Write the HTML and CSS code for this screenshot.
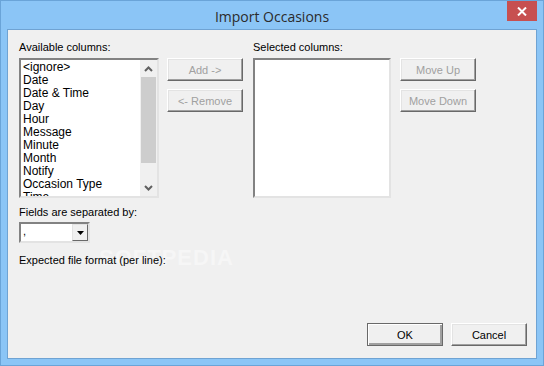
FILE: index.html
```html
<!DOCTYPE html>
<html lang="en">
<head>
    <meta charset="UTF-8">
    <title>Import Occasions</title>
    <link rel="stylesheet" href="styles.css">
</head>
<body>
    <div class="window">
        <div class="titlebar">
            <span class="title">Import Occasions</span>
            <div class="close">
                <svg width="10" height="9" viewBox="0 0 10 9"><path d="M1 0.5 L9 8.5 M9 0.5 L1 8.5" stroke="#fff" stroke-width="2"/></svg>
            </div>
        </div>

        <div class="client">
            <div class="watermark">SOFTPEDIA</div>

            <div class="columns">
                <div class="col col-list">
                    <label class="lbl">Available columns:</label>
                    <div class="listbox">
                        <ul class="items">
                            <li>&lt;ignore&gt;</li>
                            <li>Date</li>
                            <li>Date &amp; Time</li>
                            <li>Day</li>
                            <li>Hour</li>
                            <li>Message</li>
                            <li>Minute</li>
                            <li>Month</li>
                            <li>Notify</li>
                            <li>Occasion Type</li>
                            <li>Time</li>
                        </ul>
                        <div class="scrollbar">
                            <div class="arrow">
                                <svg width="9" height="6" viewBox="0 0 9 6"><path d="M1 5 L4.5 1.5 L8 5" stroke="#606060" stroke-width="2" fill="none"/></svg>
                            </div>
                            <div class="track"><div class="thumb"></div></div>
                            <div class="arrow">
                                <svg width="9" height="6" viewBox="0 0 9 6"><path d="M1 1 L4.5 4.5 L8 1" stroke="#606060" stroke-width="2" fill="none"/></svg>
                            </div>
                        </div>
                    </div>
                </div>

                <div class="col col-btn col-add">
                    <button class="btn" disabled>Add -&gt;</button>
                    <button class="btn" disabled>&lt;- Remove</button>
                </div>

                <div class="col col-sel">
                    <label class="lbl">Selected columns:</label>
                    <div class="listbox"></div>
                </div>

                <div class="col col-btn col-move">
                    <button class="btn" disabled>Move Up</button>
                    <button class="btn" disabled>Move Down</button>
                </div>
            </div>

            <label class="lbl sep-lbl">Fields are separated by:</label>
            <div class="combo">
                <span class="combo-value">,</span>
                <div class="combo-btn">
                    <svg width="7" height="4" viewBox="0 0 7 4"><path d="M0 0 H7 L3.5 4 Z" fill="#000"/></svg>
                </div>
            </div>
            <label class="lbl fmt-lbl">Expected file format (per line):</label>

            <div class="footer">
                <button class="btn btn-default">OK</button>
                <button class="btn">Cancel</button>
            </div>
        </div>
    </div>
</body>
</html>
```

FILE: styles.css
```css
body {
    margin: 0;
    font-family: "Liberation Sans", Arial, sans-serif;
    font-size: 11px;
    color: #000;
}
.window {
    width: 544px;
    height: 366px;
    background: #8bc5f6;
    box-sizing: border-box;
    border: 1px solid #6aa4d8;
    display: flex;
    flex-direction: column;
}
.titlebar {
    height: 28px;
    position: relative;
    display: flex;
    justify-content: center;
    align-items: center;
}
.title {
    font-family: "Open Sans", "Noto Sans", sans-serif;
    font-size: 14px;
    color: #2b2b2b;
    margin-top: 3px;
}
.close {
    position: absolute;
    right: 6px;
    top: 0;
    width: 30px;
    height: 20px;
    background: #c75050;
    display: flex;
    justify-content: center;
    align-items: center;
}
.client {
    position: relative;
    margin: 0 6px 0 6px;
    height: 330px;
    box-sizing: border-box;
    border: 1px solid #6fa3d3;
    background: #f0f0f0;
    padding: 11px 9px 12px 11px;
    display: flex;
    flex-direction: column;
}
.client > * {
    position: relative;
}
.columns {
    display: flex;
    height: 157px;
}
.lbl {
    display: block;
    height: 13px;
    line-height: 13px;
    white-space: nowrap;
}
.col-list {
    width: 140px;
    display: flex;
    flex-direction: column;
    gap: 4px;
}
.col-sel {
    width: 138px;
    display: flex;
    flex-direction: column;
    gap: 4px;
    margin-left: 10px;
}
.col-btn {
    width: 76px;
    padding-top: 17px;
    display: flex;
    flex-direction: column;
    gap: 8px;
}
.col-add {
    margin-left: 8px;
}
.col-move {
    margin-left: 9px;
}
.listbox {
    height: 140px;
    box-sizing: border-box;
    background: #fff;
    border: 2px solid;
    border-color: #828282 #e3e3e3 #e3e3e3 #828282;
    display: flex;
    overflow: hidden;
}
.items {
    list-style: none;
    margin: 0;
    padding: 1px 0 0 2px;
    flex: 1;
    font-size: 12px;
    line-height: 13px;
}
.scrollbar {
    width: 17px;
    background: #f0f0f0;
    display: flex;
    flex-direction: column;
}
.arrow {
    height: 17px;
    display: flex;
    justify-content: center;
    align-items: center;
}
.track {
    flex: 1;
    padding: 0 1px;
}
.thumb {
    height: 86px;
    background: #cdcdcd;
}
.btn {
    width: 76px;
    height: 23px;
    box-sizing: border-box;
    padding: 0;
    font-family: "Liberation Sans", Arial, sans-serif;
    font-size: 11px;
    color: #000;
    background: #f0f0f0;
    border: 1px solid;
    border-color: #fff #696969 #696969 #fff;
    box-shadow: inset -1px -1px #a0a0a0, inset 1px 1px #e3e3e3;
}
.btn:disabled {
    color: #a0a0a0;
}
.btn-default {
    border-color: #696969;
    box-shadow: inset 1px 1px #fff, inset -2px -2px #a0a0a0;
}
.sep-lbl {
    margin-top: 8px;
}
.combo {
    margin-top: 3px;
    width: 71px;
    height: 21px;
    box-sizing: border-box;
    background: #fff;
    border: 2px solid;
    border-color: #828282 #e3e3e3 #e3e3e3 #828282;
    display: flex;
}
.combo-value {
    flex: 1;
    padding-left: 2px;
    line-height: 14px;
}
.combo-btn {
    width: 16px;
    box-sizing: border-box;
    background: #f0f0f0;
    border: 1px solid;
    border-color: #e3e3e3 #696969 #696969 #e3e3e3;
    display: flex;
    justify-content: center;
    align-items: center;
}
.fmt-lbl {
    margin-top: 11px;
}
.footer {
    margin-top: auto;
    display: flex;
    justify-content: flex-end;
    gap: 8px;
}
.client > .watermark {
    position: absolute;
    left: 91px;
    top: 215px;
    font-family: "Liberation Sans", Arial, sans-serif;
    font-weight: bold;
    font-size: 22px;
    letter-spacing: 1px;
    color: #f6f6f6;
}
```
